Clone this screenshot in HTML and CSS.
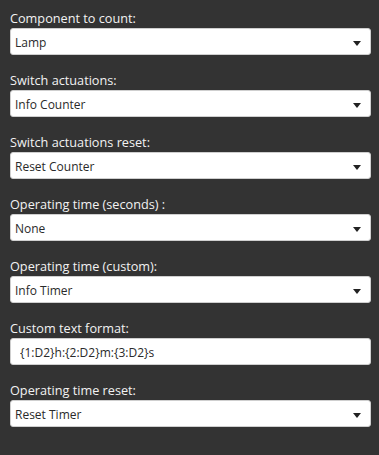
FILE: index.html
```html
<!DOCTYPE html>
<html lang="en">
<head>
    <meta charset="UTF-8">
    <meta name="viewport" content="width=device-width, initial-scale=1.0">
    <title>Counter settings</title>
    <link rel="stylesheet" href="styles.css">
</head>
<body>

<div class="settings">
    <div class="field">
        <label>Component to count:</label>
        <div class="select"><span>Lamp</span><svg class="arrow" width="8" height="5" viewBox="0 0 8 5"><path d="M0 0H8L4 5Z"/></svg></div>
    </div>

    <div class="field">
        <label>Switch actuations:</label>
        <div class="select"><span>Info Counter</span><svg class="arrow" width="8" height="5" viewBox="0 0 8 5"><path d="M0 0H8L4 5Z"/></svg></div>
    </div>

    <div class="field">
        <label>Switch actuations reset:</label>
        <div class="select"><span>Reset Counter</span><svg class="arrow" width="8" height="5" viewBox="0 0 8 5"><path d="M0 0H8L4 5Z"/></svg></div>
    </div>

    <div class="field">
        <label>Operating time (seconds) :</label>
        <div class="select"><span>None</span><svg class="arrow" width="8" height="5" viewBox="0 0 8 5"><path d="M0 0H8L4 5Z"/></svg></div>
    </div>

    <div class="field">
        <label>Operating time (custom):</label>
        <div class="select"><span>Info Timer</span><svg class="arrow" width="8" height="5" viewBox="0 0 8 5"><path d="M0 0H8L4 5Z"/></svg></div>
    </div>

    <div class="field">
        <label for="format">Custom text format:</label>
        <input type="text" id="format" class="text-input" value="{1:D2}h:{2:D2}m:{3:D2}s">
    </div>

    <div class="field">
        <label>Operating time reset:</label>
        <div class="select"><span>Reset Timer</span><svg class="arrow" width="8" height="5" viewBox="0 0 8 5"><path d="M0 0H8L4 5Z"/></svg></div>
    </div>
</div>

</body>
</html>
```

FILE: styles.css
```css
/* Basic styling */
body {
    font-family: "Open Sans", "Noto Sans", sans-serif;
    background-color: #333333;
    margin: 0;
    padding: 8px 8px 28px 10px;
}
.field {
    margin-bottom: 15px;
}
.field label {
    display: block;
    color: #f2f2f2;
    font-size: 12.7px;
    line-height: 20px;
}
.select, .text-input {
    box-sizing: border-box;
    width: 361px;
    height: 27px;
    background-color: #fff;
    border: 1px solid #cfcfcf;
    border-radius: 3px;
    color: #2a2a2a;
    font-family: inherit;
    font-size: 12px;
}
.select {
    display: flex;
    align-items: center;
    justify-content: space-between;
    padding: 2px 9px 0 4px;
}
.select .arrow {
    fill: #222;
    margin-top: 1px;
}
.text-input {
    display: block;
    margin: 0;
    padding: 2px 9px 0 9px;
    outline: none;
}
```
